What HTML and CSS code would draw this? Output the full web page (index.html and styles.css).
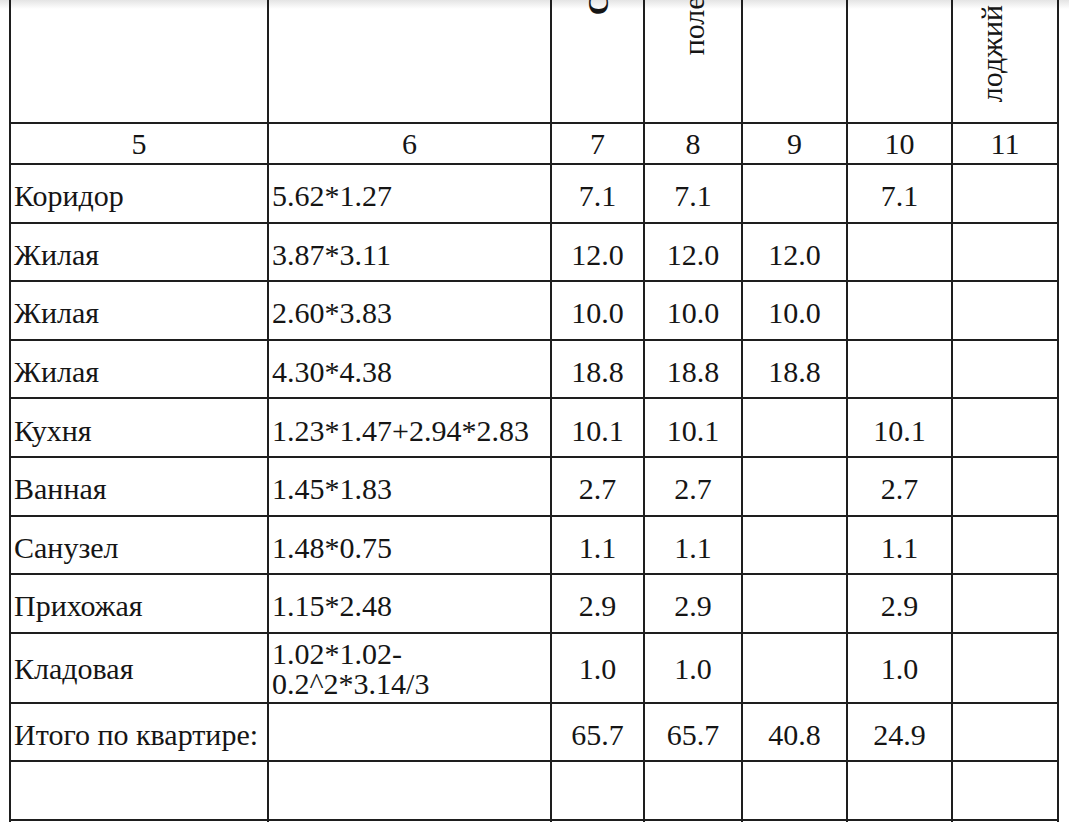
FILE: index.html
```html
<!DOCTYPE html>
<html lang="ru">
<head>
    <meta charset="UTF-8">
    <title>Экспликация площадей квартиры</title>
    <link rel="stylesheet" href="styles.css">
</head>
<body>
    <table class="sheet">
        <colgroup>
            <col class="col-name">
            <col class="col-calc">
            <col class="col-7">
            <col class="col-8">
            <col class="col-9">
            <col class="col-10">
            <col class="col-11">
        </colgroup>
        <thead>
            <tr class="head">
                <th></th>
                <th></th>
                <th class="rot rot-total"><span>Сумма</span></th>
                <th class="rot rot-useful"><span>полезная</span></th>
                <th></th>
                <th></th>
                <th class="rot rot-loggia"><span>лоджий</span></th>
            </tr>
            <tr class="nums">
                <td>5</td>
                <td>6</td>
                <td>7</td>
                <td>8</td>
                <td>9</td>
                <td>10</td>
                <td>11</td>
            </tr>
        </thead>
        <tbody>
            <tr>
                <td class="name">Коридор</td>
                <td class="calc">5.62*1.27</td>
                <td>7.1</td><td>7.1</td><td></td><td>7.1</td><td></td>
            </tr>
            <tr>
                <td class="name">Жилая</td>
                <td class="calc">3.87*3.11</td>
                <td>12.0</td><td>12.0</td><td>12.0</td><td></td><td></td>
            </tr>
            <tr>
                <td class="name">Жилая</td>
                <td class="calc">2.60*3.83</td>
                <td>10.0</td><td>10.0</td><td>10.0</td><td></td><td></td>
            </tr>
            <tr>
                <td class="name">Жилая</td>
                <td class="calc">4.30*4.38</td>
                <td>18.8</td><td>18.8</td><td>18.8</td><td></td><td></td>
            </tr>
            <tr>
                <td class="name">Кухня</td>
                <td class="calc">1.23*1.47+2.94*2.83</td>
                <td>10.1</td><td>10.1</td><td></td><td>10.1</td><td></td>
            </tr>
            <tr>
                <td class="name">Ванная</td>
                <td class="calc">1.45*1.83</td>
                <td>2.7</td><td>2.7</td><td></td><td>2.7</td><td></td>
            </tr>
            <tr>
                <td class="name">Санузел</td>
                <td class="calc">1.48*0.75</td>
                <td>1.1</td><td>1.1</td><td></td><td>1.1</td><td></td>
            </tr>
            <tr>
                <td class="name">Прихожая</td>
                <td class="calc">1.15*2.48</td>
                <td>2.9</td><td>2.9</td><td></td><td>2.9</td><td></td>
            </tr>
            <tr class="tall">
                <td class="name">Кладовая</td>
                <td class="calc">1.02*1.02-<br>0.2^2*3.14/3</td>
                <td>1.0</td><td>1.0</td><td></td><td>1.0</td><td></td>
            </tr>
            <tr>
                <td class="name">Итого по квартире:</td>
                <td class="calc"></td>
                <td>65.7</td><td>65.7</td><td>40.8</td><td>24.9</td><td></td>
            </tr>
            <tr>
                <td></td><td></td><td></td><td></td><td></td><td></td><td></td>
            </tr>
            <tr>
                <td></td><td></td><td></td><td></td><td></td><td></td><td></td>
            </tr>
        </tbody>
    </table>
</body>
</html>
```

FILE: styles.css
```css
html {
    background: linear-gradient(#e4e4e4, #ffffff 9px);
}
body {
    margin: 0;
    overflow: hidden;
    font-family: "Liberation Serif", Tinos, "DejaVu Serif", serif;
    font-size: 30px;
    color: #151515;
}
.sheet {
    border-collapse: collapse;
    table-layout: fixed;
    width: 1050px;
    margin: -99px 0 0 9px;
}
.sheet td,
.sheet th {
    border: 2px solid #1e1e1e;
    padding: 0 3px;
    text-align: center;
    vertical-align: middle;
    font-weight: normal;
}
.col-name { width: 258px; }
.col-calc { width: 283px; }
.col-7 { width: 93px; }
.col-8 { width: 98px; }
.col-9 { width: 105px; }
.col-10 { width: 105px; }
.col-11 { width: 106px; }

.sheet .head {
    height: 221px;
}
.sheet .head th {
    vertical-align: bottom;
    padding: 0;
    line-height: 0;
}
.rot span {
    display: inline-block;
    vertical-align: bottom;
    writing-mode: vertical-rl;
    transform: rotate(180deg);
    white-space: nowrap;
    line-height: 1;
}
.sheet .head .rot-total {
    padding-bottom: 107px;
    font-weight: bold;
}
.sheet .head .rot-useful {
    padding-bottom: 67px;
}
.sheet .head .rot-loggia {
    padding-bottom: 20px;
}
.rot-useful span {
    margin-left: 2px;
}
.rot-loggia span {
    margin-right: 26px;
}

.sheet .nums {
    height: 41px;
}
.sheet .nums td {
    padding-top: 0;
}
tbody tr {
    height: 58.6px;
}
.sheet tbody td {
    padding-top: 6px;
}
tbody tr.tall {
    height: 70px;
}
.sheet tbody tr.tall td {
    padding-top: 3px;
}
.sheet .name,
.sheet .calc {
    text-align: left;
}
.calc {
    line-height: 1;
}
```
